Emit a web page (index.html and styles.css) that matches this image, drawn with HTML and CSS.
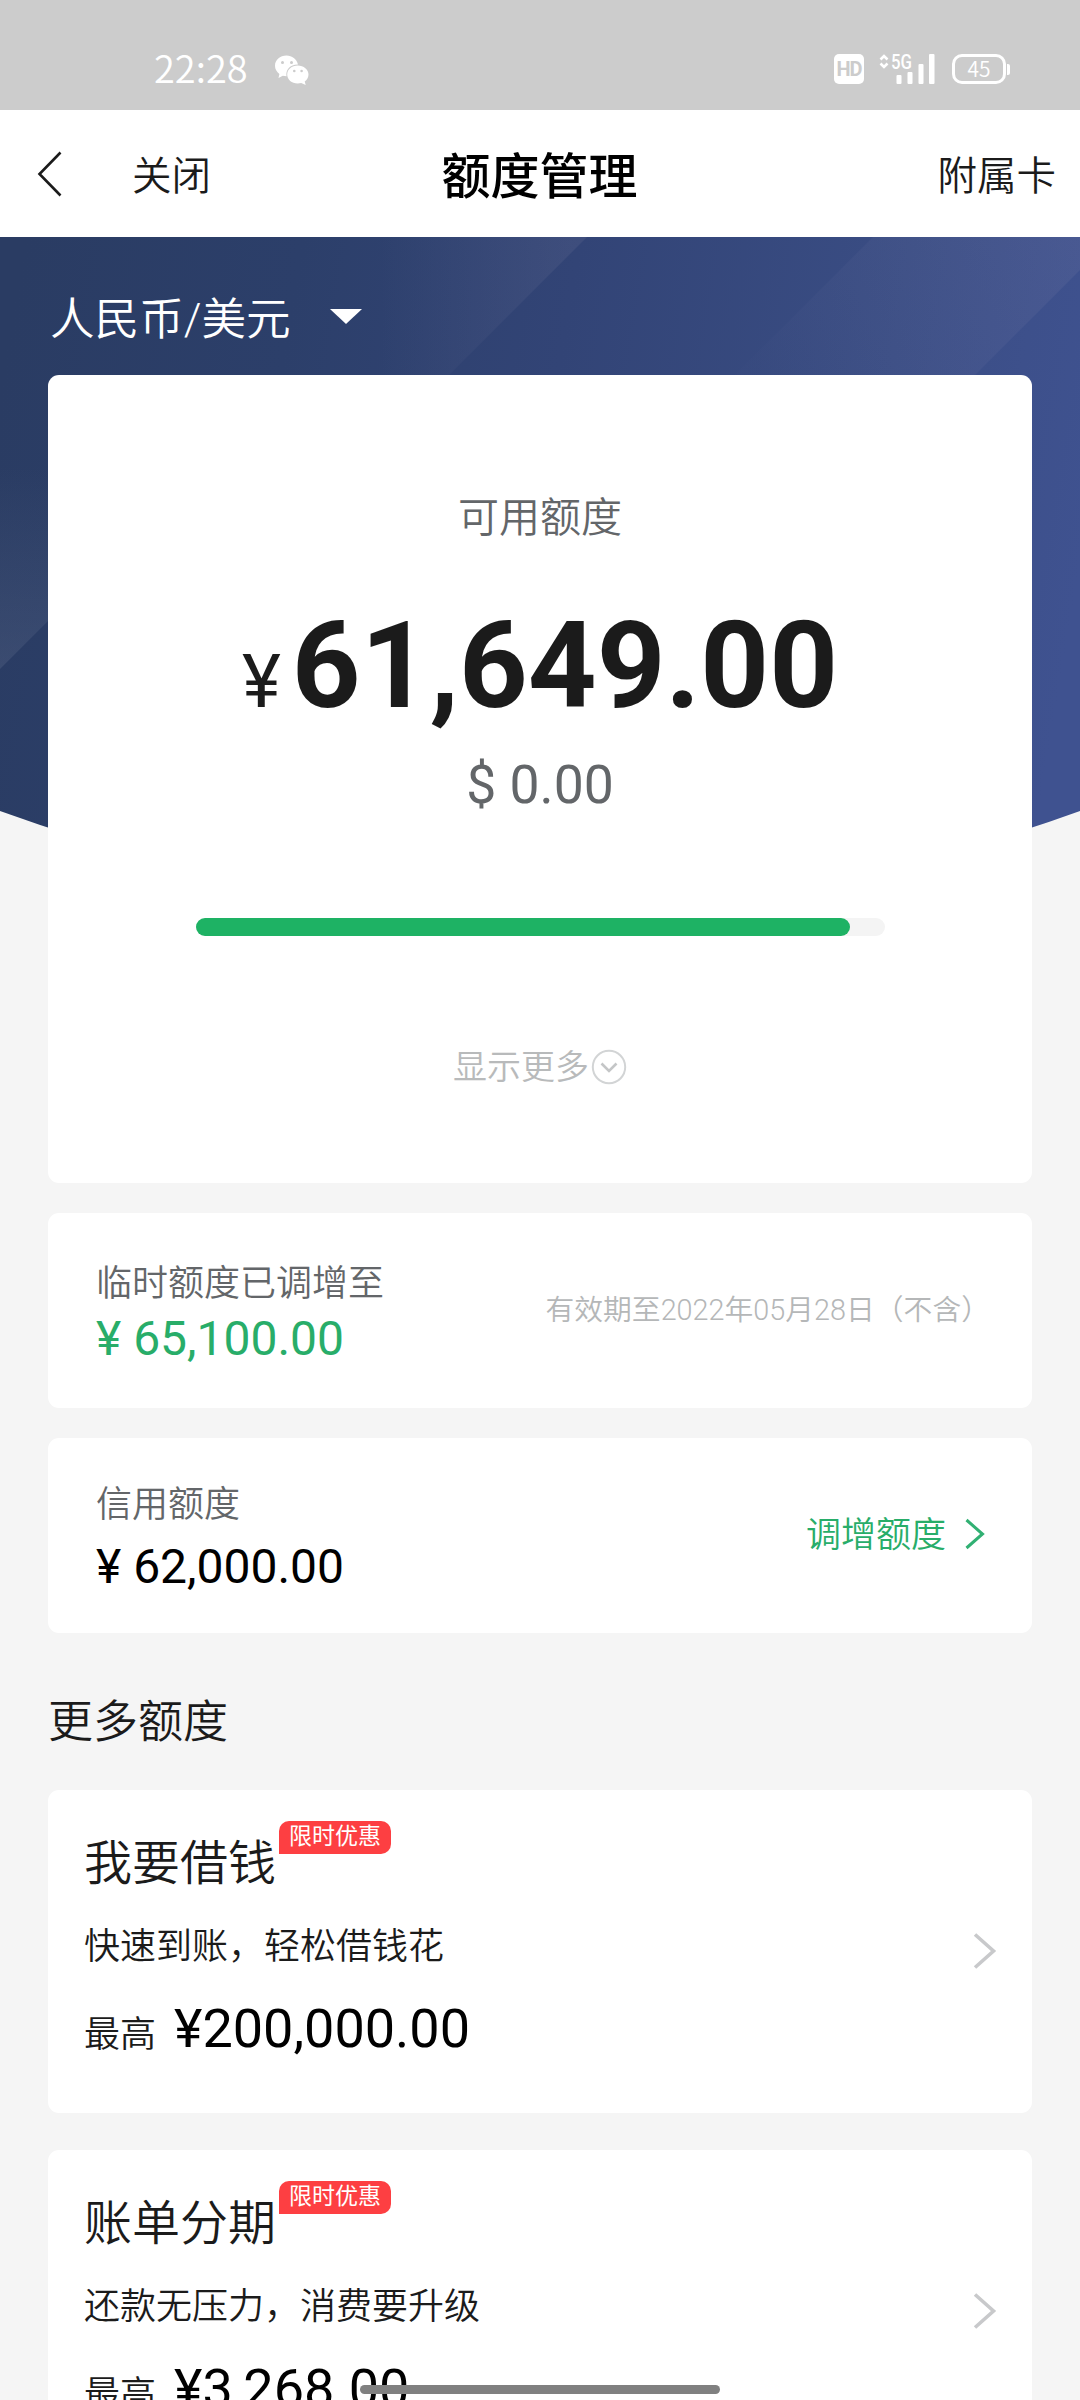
FILE: index.html
```html
<!DOCTYPE html>
<html lang="zh-CN">
<head>
<meta charset="utf-8">
<title>额度管理</title>
<link rel="stylesheet" href="styles.css">
</head>
<body>
<div class="screen">
  <header class="status">
    <span class="clock">22:28</span>
    <svg class="wechat" width="34" height="30" viewBox="0 0 34 30">
      <path fill="#fff" d="M11.500 0.500C5 .500 0 5 0 10.700c0 3.400 1.700 6.200 4.400 8.200L3.500 23l4.300-2.300c1.200.300 2.300.500 3.700.500C10.500 15 15 9.300 23 9.400 21.700 4.200 17 .500 11.500.500z"/>
      <path fill="#fff" d="M22.700 10.500c-6 0-10.500 4-10.500 9s4.500 9 10.500 9c1.200 0 2.400-.200 3.500-.500l4.500 2-1-3.400c2.300-1.700 3.800-4.200 3.800-7.100 0-5-4.800-9-10.800-9z"/>
      <g fill="#ccc"><circle cx="7.500" cy="7.500" r="1.500"/><circle cx="16.500" cy="7.500" r="1.500"/><circle cx="19.300" cy="16" r="1.300"/><circle cx="26.600" cy="16" r="1.300"/></g>
    </svg>
    <span class="hd">HD</span>
    <svg class="signal" width="56" height="32" viewBox="0 0 56 32">
      <path d="M1.500 6.500 5 3l3.500 3.500M1.500 10.500 5 14l3.500-3.500" fill="none" stroke="#fff" stroke-width="2.600"/>
      <text class="signal-text" x="12" y="15.500" textLength="21" lengthAdjust="spacingAndGlyphs">5G</text>
      <g fill="#fff"><rect x="17.500" y="22" width="5" height="9" rx="1"/><rect x="28.500" y="19" width="5" height="12" rx="1"/><rect x="39.500" y="11" width="5" height="20" rx="1"/><rect x="50" y="1" width="5.500" height="30" rx="1"/></g>
    </svg>
    <span class="battery">45</span>
  </header>

  <nav class="nav">
    <svg class="back" width="26" height="46" viewBox="0 0 26 46"><path d="M23.500 1.500 2.500 23l21 21.500" fill="none" stroke="#1b1b1b" stroke-width="2.600"/></svg>
    <span class="close">关闭</span>
    <h1 class="title">额度管理</h1>
    <span class="sub-card">附属卡</span>
  </nav>

  <main class="content">
    <svg class="hero" width="1080" height="625" viewBox="0 0 1080 625">
      <defs>
        <linearGradient id="base" gradientUnits="userSpaceOnUse" x1="0" y1="150" x2="1080" y2="330">
          <stop offset="0" stop-color="#2a3c63"/><stop offset=".25" stop-color="#2c3f6a"/><stop offset=".5" stop-color="#324476"/><stop offset=".8" stop-color="#3a4d84"/><stop offset="1" stop-color="#3f5290"/>
        </linearGradient>
        <linearGradient id="bandA" gradientUnits="userSpaceOnUse" x1="380" y1="30" x2="570" y2="30">
          <stop offset="0" stop-color="#5a648c" stop-opacity="0"/><stop offset="1" stop-color="#5a648c" stop-opacity=".3"/>
        </linearGradient>
        <linearGradient id="bandB" gradientUnits="userSpaceOnUse" x1="760" y1="138" x2="1080" y2="0">
          <stop offset="0" stop-color="#6a72a0" stop-opacity=".02"/><stop offset="1" stop-color="#6a72a0" stop-opacity=".25"/>
        </linearGradient>
        <linearGradient id="bandC" gradientUnits="userSpaceOnUse" x1="0" y1="230" x2="0" y2="430">
          <stop offset="0" stop-color="#5a6888" stop-opacity="0"/><stop offset="1" stop-color="#5a6888" stop-opacity=".34"/>
        </linearGradient>
        <clipPath id="arc"><path d="M0 0H1080V574Q540 770 0 574Z"/></clipPath>
      </defs>
      <g clip-path="url(#arc)">
        <path d="M0 0H1080V625H0Z" fill="url(#base)"/>
        <path d="M300 0H587L349 238H300Z" fill="url(#bandA)"/>
        <path d="M873 0H1080V33L842 271H602Z" fill="url(#bandB)"/>
        <path d="M0 200H100V332L0 432Z" fill="url(#bandC)"/>
      </g>
    </svg>

    <div class="currency">
      <span>人民币/美元</span>
      <i class="caret"></i>
    </div>

    <section class="card available">
      <p class="available-label">可用额度</p>
      <p class="available-cny"><span class="yen">¥</span><span class="sum">61,649.00</span></p>
      <p class="available-usd">$ 0.00</p>
      <div class="track"><div class="fill"></div></div>
      <p class="more"><span>显示更多</span>
        <svg width="36" height="36" viewBox="0 0 36 36" fill="none"><circle cx="18" cy="18" r="16.200" stroke="#d2d4d5" stroke-width="2"/><path d="M10.500 14.500 18 22l7.500-7.500" stroke="#c4c6c7" stroke-width="2.600"/></svg>
      </p>
    </section>

    <section class="card row temp">
      <div>
        <p class="label">临时额度已调增至</p>
        <p class="amount green">¥ 65,100.00</p>
      </div>
      <p class="validity">有效期至2022年05月28日（不含）</p>
    </section>

    <section class="card row credit">
      <div>
        <p class="label">信用额度</p>
        <p class="amount">¥ 62,000.00</p>
      </div>
      <p class="raise"><span>调增额度</span>
        <svg width="22" height="32" viewBox="0 0 22 32"><path d="M2.500 2 18.500 16 2.500 30" fill="none" stroke="#31b073" stroke-width="3"/></svg>
      </p>
    </section>

    <h2 class="heading">更多额度</h2>

    <section class="card offer">
      <div>
        <h3 class="offer-title">我要借钱<span class="badge">限时优惠</span></h3>
        <p class="offer-text">快速到账，轻松借钱花</p>
        <p class="offer-max">最高<span class="offer-sum">¥200,000.00</span></p>
      </div>
      <svg class="go" width="26" height="38" viewBox="0 0 26 38"><path d="M3 2.500 21.500 19 3 35.500" fill="none" stroke="#c8c9cb" stroke-width="3.600"/></svg>
    </section>

    <section class="card offer">
      <div>
        <h3 class="offer-title">账单分期<span class="badge">限时优惠</span></h3>
        <p class="offer-text">还款无压力，消费要升级</p>
        <p class="offer-max">最高<span class="offer-sum">¥3,268.00</span></p>
      </div>
      <svg class="go" width="26" height="38" viewBox="0 0 26 38"><path d="M3 2.500 21.500 19 3 35.500" fill="none" stroke="#c8c9cb" stroke-width="3.600"/></svg>
    </section>
  </main>
  <div class="home-bar"></div>
</div>
</body>
</html>
```

FILE: styles.css
```css
* { box-sizing: border-box; margin: 0; padding: 0; }
body { background: #f5f5f5; }
p, h1, h2, h3, span { white-space: nowrap; }

.screen {
  position: relative;
  width: 1080px;
  height: 2400px;
  overflow: hidden;
  background: #f5f5f5;
  color: #1b1b1b;
  font-family: Roboto, "Noto Sans CJK SC", sans-serif;
  font-weight: 350;
}

/* Status bar */
.status {
  display: flex;
  align-items: flex-start;
  height: 110px;
  padding: 54px 69px 0 154px;
  background: #ccc;
  color: #fff;
}
.clock { width: 121px; margin-top: -2px; font: 350 38px/30px "Noto Sans CJK SC", sans-serif; }
.wechat { margin-top: 1px; }
.hd {
  width: 30px;
  height: 30px;
  margin-left: 525px;
  border-radius: 5px;
  background: #fff;
  color: #ccc;
  font: 700 20px/31px Roboto, sans-serif;
  text-align: center;
  letter-spacing: -1px;
}
.signal { margin-left: 15px; margin-top: -1px; }
.signal-text { fill: #fff; font: 500 20px Roboto, sans-serif; }
.battery {
  position: relative;
  width: 54px;
  height: 30px;
  margin-left: 17px;
  border: 3px solid #fff;
  border-radius: 10px;
  font: 350 21px/22px "Noto Sans CJK SC", sans-serif;
  text-align: center;
}
.battery::after {
  content: "";
  position: absolute;
  right: -7px;
  top: 7px;
  width: 3px;
  height: 11px;
  border-radius: 0 2px 2px 0;
  background: #fff;
}

/* Navigation */
.nav {
  display: grid;
  grid-template-columns: 1fr auto 1fr;
  grid-template-rows: 125px;
  align-items: center;
  height: 127px;
  padding: 0 24px 0 37px;
  background: #fff;
}
.back { grid-area: 1 / 1; margin-top: 2px; }
.close { grid-area: 1 / 1; padding-left: 95px; font-size: 39.500px; }
.title { grid-area: 1 / 2; margin-left: -14px; color: #000; font-size: 49px; font-weight: 500; }
.sub-card { grid-area: 1 / 3; justify-self: end; font-size: 39.500px; }

/* Content */
.content { position: relative; padding: 0 48px; }
.hero { position: absolute; left: 0; top: 0; }
.currency {
  position: relative;
  display: flex;
  align-items: center;
  height: 138px;
  padding: 18px 0 0 2px;
  color: #fff;
  font-size: 44.600px;
}
.caret {
  margin: 2px 0 0 39px;
  border: 16.500px solid transparent;
  border-top: 15px solid #fff;
  border-bottom: 0;
}
.card {
  position: relative;
  border-radius: 11px;
  background: #fff;
}

.available {
  height: 808px;
  padding-top: 112px;
  text-align: center;
}
.available-label { color: #636669; font-size: 41px; line-height: 62px; }
.available-cny { height: 140px; margin-top: 47px; line-height: 140px; }
.yen { margin-right: 11px; font-size: 74px; font-weight: 400; }
.sum { font-size: 120px; font-weight: 700; }
.available-usd { margin-top: 19px; color: #636669; font-size: 53.500px; font-weight: 400; line-height: 60px; }
.track {
  width: 689px;
  height: 18px;
  margin: 103px auto 0;
  border-radius: 9px;
  background: #f4f4f4;
}
.fill { width: 654px; height: 18px; border-radius: 9px; background: #1eb264; }
.more {
  display: flex;
  justify-content: center;
  align-items: center;
  gap: 2px;
  margin-top: 106px;
  color: #b8babb;
  font-size: 34px;
  line-height: 50px;
}

.row {
  display: flex;
  justify-content: space-between;
  height: 195px;
  padding: 0 49px 0 48px;
}
.temp { margin-top: 30px; }
.credit { margin-top: 30px; }
.label { color: #636669; font-size: 36px; line-height: 50px; }
.amount { color: #000; font-size: 48px; font-weight: 400; line-height: 56px; }
.temp .label { margin-top: 46px; }
.temp .amount { margin-top: 2px; }
.credit .label { margin-top: 42px; }
.credit .amount { margin-top: 9px; }
.amount.green { color: #28ad69; }
.validity { margin: 77px -7px 0 0; color: #b5b7b8; font-size: 28.800px; line-height: 40px; }
.raise {
  display: flex;
  align-items: center;
  gap: 18px;
  height: 50px;
  margin: 71px -3px 0 0;
  color: #28ad69;
  font-size: 35px;
}
.raise span { margin-top: -5px; }

.heading { height: 157px; padding: 60px 0 0; font-size: 45px; font-weight: 350; line-height: 60px; }
.offer {
  display: flex;
  justify-content: space-between;
  height: 323px;
  margin-bottom: 37px;
  padding: 0 34px 0 36px;
}
.offer-title {
  display: flex;
  margin-top: 44px;
  font-size: 48px;
  font-weight: 350;
  line-height: 60px;
}
.badge {
  width: 112px;
  height: 33px;
  margin: -13px 0 0 3px;
  border-radius: 10px 10px 10px 0;
  background: #fd3f42;
  color: #fff;
  font-size: 23px;
  font-weight: 400;
  line-height: 32px;
  text-align: center;
}
.offer-text { margin-top: 28px; font-size: 36px; line-height: 50px; }
.offer-max { margin-top: 22px; font-size: 36px; line-height: 70px; }
.offer-sum { margin-left: 18px; color: #000; font-size: 54px; font-weight: 400; }
.go { margin-top: 142px; }

.home-bar {
  position: absolute;
  left: 360px;
  top: 2385px;
  width: 360px;
  height: 9px;
  border-radius: 5px;
  background: #808080;
}
```
